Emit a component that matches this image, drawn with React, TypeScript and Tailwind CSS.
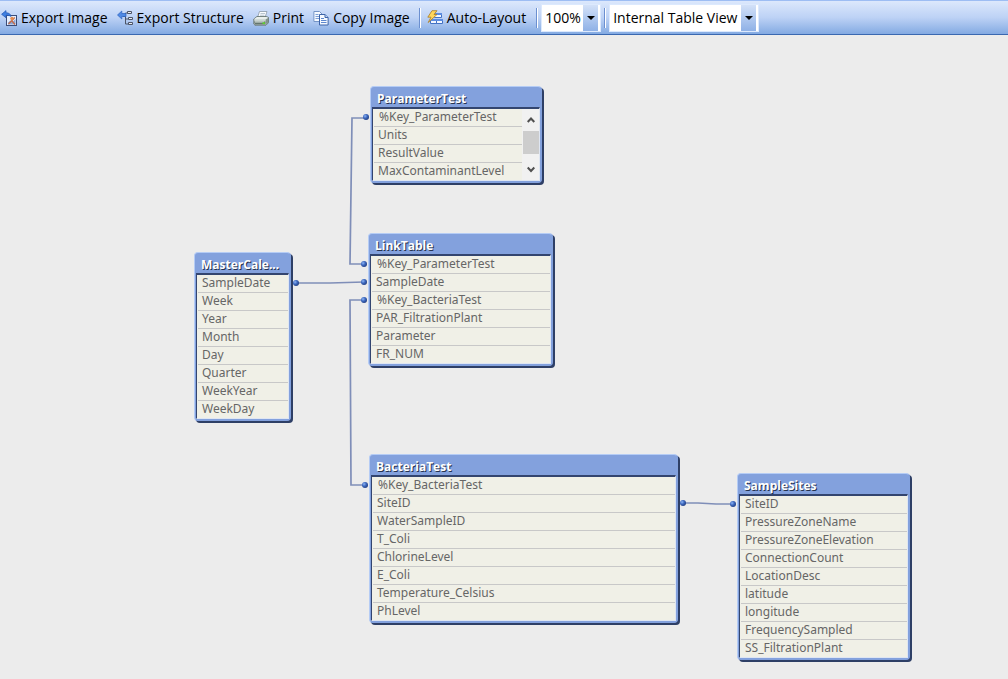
import { type ReactNode } from "react";

type TableNode = {
  name: string;
  place: string;
  fields: string[];
  scrolls?: boolean;
};

const TABLES: TableNode[] = [
  {
    name: "ParameterTest",
    place: "left-[370px] top-[51px] w-[172px]",
    fields: ["%Key_ParameterTest", "Units", "ResultValue", "MaxContaminantLevel"],
    scrolls: true,
  },
  {
    name: "LinkTable",
    place: "left-[368px] top-[198px] w-[185px]",
    fields: ["%Key_ParameterTest", "SampleDate", "%Key_BacteriaTest", "PAR_FiltrationPlant", "Parameter", "FR_NUM"],
  },
  {
    name: "MasterCale...",
    place: "left-[194px] top-[217px] w-[97px]",
    fields: ["SampleDate", "Week", "Year", "Month", "Day", "Quarter", "WeekYear", "WeekDay"],
  },
  {
    name: "BacteriaTest",
    place: "left-[369px] top-[419px] w-[309px]",
    fields: ["%Key_BacteriaTest", "SiteID", "WaterSampleID", "T_Coli", "ChlorineLevel", "E_Coli", "Temperature_Celsius", "PhLevel"],
  },
  {
    name: "SampleSites",
    place: "left-[737px] top-[438px] w-[173px]",
    fields: ["SiteID", "PressureZoneName", "PressureZoneElevation", "ConnectionCount", "LocationDesc", "latitude", "longitude", "FrequencySampled", "SS_FiltrationPlant"],
  },
];

const LINKS = [
  "M366 83 H352 L350 229 H364",
  "M296 248 L330 248 L364 247",
  "M364 265 H350 L351 450 H365",
  "M683 468 H698 L716 469 H733",
];

const DOTS = [
  [366, 82], [364, 229], [296, 248], [364, 247], [364, 265], [365, 450], [683, 468], [733, 469],
];

function BackArrow() {
  return <path d="M.6 4.300 5 .6v2.200c3 0 4.600 1.200 5 3.700-1.200-1-2.700-1.300-5-1.300v2.500z" fill="#3f7fe0" stroke="#2257b5" strokeWidth=".7" />;
}

function ExportImageIcon() {
  return (
    <svg className="size-4" viewBox="0 0 16 16" aria-hidden="true">
      <rect x="5.500" y="5.500" width="10" height="10" fill="#e8effc" stroke="#3a4c78" />
      <path d="M7 14.500v-2l2.500-2 2 1.500 3-3v5.500z" fill="#8ba6d4" />
      <path d="M7.500 14 13.800 7.500M10.500 10.500l3.500 4" stroke="#c66a45" strokeWidth="1.200" />
      <circle cx="11" cy="8.500" r="1.700" fill="#e38a4e" />
      <BackArrow />
    </svg>
  );
}

function ExportStructureIcon() {
  return (
    <svg className="size-4" viewBox="0 0 16 16" aria-hidden="true">
      <path d="M6 6.500h2.500M8.500 3v11H12M8.500 9h3M8.500 3H11" fill="none" stroke="#4d5566" />
      <path d="M10.500 1.500h4v2h-4zM11.500 7.500h4v2h-4zM11.500 12.500h4v2h-4z" fill="#e9edf5" stroke="#4d5566" />
      <path d="M.5 5 4.800 1v2.500H9v3H4.800V9z" fill="#4f89e3" stroke="#2b62be" strokeWidth=".7" />
    </svg>
  );
}

function PrintIcon() {
  return (
    <svg className="size-4" viewBox="0 0 16 16" aria-hidden="true">
      <path d="M4.500 7.500 6.500 1.500h7.500l-2 6z" fill="#fbfdff" stroke="#8c99a6" strokeWidth=".8" />
      <path d="M7.500 3.500h4.500M7 5.200h4.500" stroke="#9fb0bf" strokeWidth=".7" />
      <path d="M.8 9 4 6.500h9.500l2 1v5.200l-2.500 2.500H2L.8 14z" fill="#c9d3cf" stroke="#5b6966" strokeWidth=".8" />
      <path d="M1.200 9 4.200 7h9l1.900.8-2.600 1.500H1.200z" fill="#e9efec" />
      <path d="M1 11.500h11.500v3H2z" fill="#65766f" />
      <path d="M2 11.500h9v1H2z" fill="#dbe5e0" />
      <path d="M12.700 9.500v5l2.500-2V8z" fill="#82948c" />
      <path d="M9.500 12.300H12V14H9.500z" fill="#5bd22c" />
    </svg>
  );
}

function CopyIcon() {
  return (
    <svg className="size-4" viewBox="0 0 16 16" aria-hidden="true">
      <path d="M.9 1.500h5.600l2.500 2.500v7.500H.9z" fill="#f6faff" stroke="#7594c6" />
      <path d="M2.500 4.500h3M2.500 6.500h4M2.500 8.500h4" stroke="#7d9fd6" />
      <path d="M6.500 4.500h5.600l3 3v7.500H6.500z" fill="#f6faff" stroke="#3c64a9" />
      <path d="M12 4.500v3h3" fill="#bcd1f2" stroke="#3c64a9" />
      <path d="M8 8.500h3M8 10.500h5.500M8 12.500h5.500" stroke="#5d88cf" />
    </svg>
  );
}

function AutoLayoutIcon() {
  return (
    <svg className="size-4" viewBox="0 0 16 16" aria-hidden="true">
      <path d="M7.500 3.500h7v4h-7zM3.500 9.500h6v4h-6zM9.500 9.500h6v4h-6z" fill="#f3f7ff" stroke="#4272c4" />
      <path d="M7 3h8v2H7zM9 9h7v2H9zM3 9h6v2H3z" fill="#5b8ce0" />
      <path d="M5 .7h5L7 4.500h3L1.200 12.500 4 7.200H.8z" fill="#ffd65a" stroke="#a97b25" strokeWidth=".8" />
    </svg>
  );
}

function ToolButton({ icon, children }: { icon: ReactNode; children: ReactNode }) {
  return (
    <button type="button" className="flex shrink-0 items-center gap-1 whitespace-nowrap">
      {icon}
      <span>{children}</span>
    </button>
  );
}

function Separator() {
  return <span className="h-5 w-0.5 shrink-0 border-l border-r border-l-[#6b8fd0] border-r-white" />;
}

function ToolSelect({ label, options, width }: { label: string; options: string[]; width: string }) {
  return (
    <div className={`relative flex h-7 shrink-0 border border-[#dce9fd] bg-white ${width}`}>
      <select aria-label={label} className="w-full appearance-none bg-transparent pl-[3px] outline-none">
        {options.map((o) => (
          <option key={o}>{o}</option>
        ))}
      </select>
      <span className="pointer-events-none absolute inset-y-0 right-0.5 flex w-[15px] items-center justify-center bg-gradient-to-b from-[#d3e1f8] to-[#8fb1e6]">
        <svg className="h-1 w-2" viewBox="0 0 8 4" aria-hidden="true">
          <path d="M0 0h8L4 4z" fill="#000" />
        </svg>
      </span>
    </div>
  );
}

function Toolbar() {
  return (
    <header className="flex h-[35px] items-center border-t border-b border-t-[#9dbdf3] border-b-[#3a68b0] bg-gradient-to-b from-[#dce8fc] via-[#bdd2f5] to-[#83aae2] font-['Open_Sans','Noto_Sans',sans-serif] text-[14px] leading-5 text-black">
      <div className="flex items-center gap-[9px] pl-px">
        <ToolButton icon={<ExportImageIcon />}>Export Image</ToolButton>
        <ToolButton icon={<ExportStructureIcon />}>Export Structure</ToolButton>
        <ToolButton icon={<PrintIcon />}>Print</ToolButton>
        <ToolButton icon={<CopyIcon />}>Copy Image</ToolButton>
        <Separator />
      </div>
      <div className="flex items-center gap-[3px] pl-1.5">
        <ToolButton icon={<AutoLayoutIcon />}>Auto-Layout</ToolButton>
        <span className="w-1" />
        <Separator />
        <ToolSelect label="Zoom" options={["100%", "75%", "50%"]} width="w-[60px]" />
        <Separator />
        <ToolSelect label="Table view" options={["Internal Table View", "Source Table View"]} width="w-[150px]" />
      </div>
    </header>
  );
}

function ScrollRail() {
  return (
    <div className="flex w-[17px] shrink-0 flex-col items-center bg-[#f1f1f1]" aria-hidden="true">
      <svg className="h-[22px] w-2" viewBox="0 0 8 22">
        <path d="M.7 13 4 9.500 7.300 13" fill="none" stroke="#505050" strokeWidth="2" />
      </svg>
      <span className="h-[23px] w-4 bg-[#cdcdcd]" />
      <svg className="mt-auto h-[22px] w-2" viewBox="0 0 8 22">
        <path d="M.7 9.500 4 13l3.300-3.500" fill="none" stroke="#505050" strokeWidth="2" />
      </svg>
    </div>
  );
}

function TableBox({ table }: { table: TableNode }) {
  return (
    <section
      className={`absolute rounded-[4px] border border-[#b5ccf5] border-r-[#83a1dd] border-b-[#83a1dd] bg-[#83a1dd] px-px pb-px shadow-[2px_2px_0_#2e3f66] ${table.place}`}
    >
      <h2 className="h-5 whitespace-nowrap pl-[5px] pt-0.5 font-['Open_Sans','Noto_Sans',sans-serif] text-[12px] font-bold leading-5 text-white [text-shadow:1px_1px_0_#26334f]">
        {table.name}
      </h2>
      <div className="flex border-t-2 border-l border-r border-b border-t-[#33456f] border-l-[#33456f] border-r-[#dfe6f2] border-b-[#dfe6f2] bg-[#f0f0e7]">
        <ul className="min-w-0 flex-1 pl-px font-['Noto_Sans','Open_Sans',sans-serif] text-[12px] leading-[15px] text-[#666]">
          {table.fields.map((f) => (
            <li
              key={f}
              className={`h-[18px] whitespace-nowrap border-b border-[#c8c8c8] last:h-[17px] last:border-transparent ${f.startsWith("%") ? "pl-[5px]" : "pl-1"}`}
            >
              {f}
            </li>
          ))}
        </ul>
        {table.scrolls && <ScrollRail />}
      </div>
    </section>
  );
}

export default function App() {
  return (
    <div className="flex min-h-screen flex-col bg-[#ececec]">
      <Toolbar />
      <main className="relative min-h-[640px] min-w-[920px] flex-1">
        <svg className="absolute left-0 top-0 h-[640px] w-[920px]" viewBox="0 0 920 640" aria-hidden="true">
          <defs>
            <radialGradient id="dot" cx=".35" cy=".35" r=".7">
              <stop offset="0" stopColor="#8db4f5" />
              <stop offset=".5" stopColor="#3c67bd" />
              <stop offset="1" stopColor="#233f82" />
            </radialGradient>
          </defs>
          {LINKS.map((d) => (
            <path key={d} d={d} fill="none" stroke="#7f8eb8" strokeWidth="1.700" />
          ))}
          {DOTS.map(([x, y]) => (
            <circle key={`${x}-${y}`} cx={x} cy={y} r="3" fill="url(#dot)" />
          ))}
        </svg>
        {TABLES.map((t) => (
          <TableBox key={t.name} table={t} />
        ))}
      </main>
    </div>
  );
}
